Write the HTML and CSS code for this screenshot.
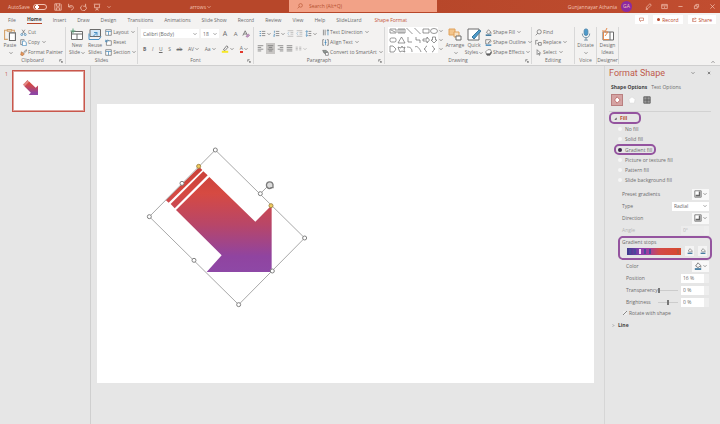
FILE: index.html
```html
<!DOCTYPE html>
<html lang="en">
    <head>
        <meta charset="UTF-8" />
        <meta name="viewport" content="width=device-width, initial-scale=1.0" />
        <title>arrows</title>
        <link rel="stylesheet" href="styles.css">
    </head>
    <body>
        <svg class="sprite" aria-hidden="true">
            <symbol id="down" viewBox="0 0 4 4"><path d="M.5 1.2 2 2.7 3.5 1.2" /></symbol>
            <symbol id="launch" viewBox="0 0 6 6"><path d="M1 4V1h3M2.5 2.5 5 5M5 3v2H3" /></symbol>
            <symbol id="save" viewBox="0 0 10 10"><path d="M1 1h7l1 1v7H1zM3 1v3h4V1M3 9V6h4v3" /></symbol>
            <symbol id="undo" viewBox="0 0 10 10"><path d="M2 1v4h4M2 5c2-3 6-2 6 1 0 2-2 2-3 3" /></symbol>
            <symbol id="redo" viewBox="0 0 10 10"><path d="M7 1v3H4M7 4a3.5 3.5 0 1 1-4-1" /></symbol>
            <symbol id="present" viewBox="0 0 10 10"><path d="M1 1.5h8M2 2v4h6V2M5 6v2M3 9l2-1 2 1" /></symbol>
            <symbol id="search" viewBox="0 0 10 10"><circle cx="6" cy="4" r="3" /><path d="M4 6 1 9" /></symbol>
            <symbol id="pen" viewBox="0 0 10 10"><path d="m2 6 5-5 2 2-5 5-2 .5zM1 9.5h3" /></symbol>
            <symbol id="window" viewBox="0 0 10 10"><path d="M1 2h8v6H1zM1 4h8M5 7V5" /></symbol>
            <symbol id="min" viewBox="0 0 10 10"><path d="M2 5h6" /></symbol>
            <symbol id="restore" viewBox="0 0 10 10"><path d="M2 4h4v4H2zM4 4V2h4v4H6" /></symbol>
            <symbol id="close" viewBox="0 0 10 10"><path d="m2 2 6 6M8 2 2 8" /></symbol>
            <symbol id="share" viewBox="0 0 10 10"><path d="M4 3H1v6h7V7M3 7c0-3 2-4 5-4M6 1l2 2-2 2" /></symbol>
            <symbol id="comment" viewBox="0 0 10 10"><path d="M1 2h8v5H5L3 9V7H1z" /></symbol>
            <symbol id="paste" viewBox="0 0 12 12"><path d="M4 10.5H1V2h2.5M7.5 2H10v2M3.5 3V1.5h4V3z" stroke="#d5a26a" /><path d="M5.5 4.5H11v7H5.5z" fill="#fff" /></symbol>
            <symbol id="cut" viewBox="0 0 10 10"><path d="M3 1l4 6M7 1 3 7" /><circle cx="2.5" cy="8" r="1.4" stroke="#3d85b8" /><circle cx="7.5" cy="8" r="1.4" stroke="#3d85b8" /></symbol>
            <symbol id="copy" viewBox="0 0 10 10"><path d="M3 8H1V1h5v1" /><path d="M3.5 3h3L9 5v4.5H3.5z" fill="#fff" stroke="#3d85b8" /></symbol>
            <symbol id="brush" viewBox="0 0 10 10"><path d="m5 5 3.5-4L10 2 6 6" /><path d="m2 4 4 3-2 2.5-3-1z" fill="#e8995e" stroke="#b97743" /></symbol>
            <symbol id="new-slide" viewBox="0 0 14 12"><path d="M1.500 3h11v8h-11zM1.500 5.500h11M7 5.500V11" fill="#fff" /><path d="M3 0v5M.5 2.500h5" stroke="#5da17a" /></symbol>
            <symbol id="reuse" viewBox="0 0 14 12"><path d="M2 1h10.500v7H2z" fill="#d6e8f5" /><path d="M4 11h7l2-3M1 5v6h4M5 8l4-4M9 7V4H6" stroke="#4a91c3" /></symbol>
            <symbol id="layout" viewBox="0 0 10 10"><path d="M1 1h8v8H1z" fill="#fff" /><path d="M1 3.5h8M5 3.5V9" stroke="#3d85b8" /></symbol>
            <symbol id="reset" viewBox="0 0 10 10"><path d="M2 2.5h7V9H2z" fill="#fff" /><path d="M1 1v3h3M1 4c1-3 4-3 5-1" stroke="#3d85b8" /></symbol>
            <symbol id="clear" viewBox="0 0 10 10"><path d="m1 7 3-6 3 6M2 5h4" /><path d="m5 8 3-3 1.500 1.500L7 9z" fill="#c89bc8" stroke="#a67aa6" /></symbol>
            <symbol id="marker" viewBox="0 0 10 10"><path d="m3 6 4-5 2 1.500L5 7z" /><path d="M1 8.500h8" stroke="#f6e827" stroke-width="2.500" /></symbol>
            <symbol id="bullets" viewBox="0 0 10 10"><path d="M4 2h5M4 5h5M4 8h5" /><path d="M1 2h1.5M1 5h1.5M1 8h1.5" stroke="#3d85b8" stroke-width="1.5" /></symbol>
            <symbol id="numbers" viewBox="0 0 10 10"><path d="M4 2h5M4 5h5M4 8h5" /><path d="M2 1v3M1 6h1.5L1 9h1.5" stroke="#3d85b8" /></symbol>
            <symbol id="indent" viewBox="0 0 10 10"><path d="M1 1h8M5 3.5h4M5 6h4M1 9h8" /><path d="m3 3-2 2 2 2" stroke="#3d85b8" /></symbol>
            <symbol id="spacing" viewBox="0 0 10 10"><path d="M5 2h4M5 5h4M5 8h4" /><path d="M2.5 1v8M1 2.5 2.5 1 4 2.5M1 7.5 2.5 9 4 7.5" stroke="#3d85b8" /></symbol>
            <symbol id="left" viewBox="0 0 10 10"><path d="M1 1h8M1 3.5h5M1 6h8M1 8.5h5" /></symbol>
            <symbol id="center" viewBox="0 0 10 10"><path d="M1 1h8M2.5 3.5h5M1 6h8M2.5 8.5h5" /></symbol>
            <symbol id="right" viewBox="0 0 10 10"><path d="M1 1h8M4 3.5h5M1 6h8M4 8.5h5" /></symbol>
            <symbol id="justify" viewBox="0 0 10 10"><path d="M1 1h8M1 3.5h8M1 6h8M1 8.5h8" /></symbol>
            <symbol id="columns" viewBox="0 0 10 10"><path d="M1 3h3M1 5h3M1 7h3M6 3h3M6 5h3M6 7h3" /></symbol>
            <symbol id="direction" viewBox="0 0 10 10"><path d="M2 1v8M4.5 1v8M7 3l1.5-2L10 3" /><path d="M8.5 1v8" stroke="#3d85b8" /></symbol>
            <symbol id="valign" viewBox="0 0 10 10"><path d="M3 1H1v8h2M7 1h2v8H7" /><path d="M5 1v8M3.5 5h3" stroke="#3d85b8" /></symbol>
            <symbol id="smart" viewBox="0 0 10 10"><path d="M1 2h5l2 2-2 2H3z" fill="#8f9a93" /><path d="M5 5h4v4H5z" fill="#fff" /></symbol>
            <symbol id="gallery" viewBox="0 0 50 26">
                <path d="M2 2h6v4H2zM3 3l4 2M10 2h7v4h-7zM11 3h5M11 5h5M18.5 1l6 6M26.5 1l6 6M35 2h6v4h-6z" />
                <ellipse cx="46" cy="4" rx="3.5" ry="2.5" />
                <rect x="2" y="11" width="6" height="4" rx="1.5" />
                <path d="m13.5 10-3.5 6h7zM20 10v5h4M28 10v3h4v3M35 12h4v-2l2.5 3-2.5 3v-2h-4zM44.5 10h3v3H49l-3 3-3-3h1.5z" />
                <path d="M2 19h3l3 3-2 3H2zM10 20l3 1 1-2 1 2 2-1-1 3 1 2-3-1-2 1-1-2zM19 20c4 0 5 2 5 5M27 20c2-2 5 2 6 5M39 19c-2 0-1 3-3 3 2 0 1 3 3 3M44 19c2 0 1 3 3 3-2 0-1 3-3 3" />
            </symbol>
            <symbol id="arrange" viewBox="0 0 14 13"><path d="M1 1h6v6H1z" fill="#f3c58c" stroke="#e0a25c" /><path d="M6 4h5v5H6z" fill="#f8e2c4" stroke="#e0a25c" /><path d="M8 8h5v4H8z" fill="#fff" /></symbol>
            <symbol id="quick" viewBox="0 0 14 13"><path d="M1 1h11v11H1z" fill="#fff" /><path d="m5 9 7-7 2 1-7 8z" fill="#4f9bc9" stroke="#3a789e" /></symbol>
            <symbol id="fill" viewBox="0 0 10 10"><path d="m2 5 3-4 3.5 3.5L5 7zM8.500 5v2" /><path d="M1 8.800h8" stroke="#2f6d96" stroke-width="2" /></symbol>
            <symbol id="outline" viewBox="0 0 10 10"><path d="M8 1H1v6h2M4 6l4-4 1 1-4 4z" /><path d="M1 8.800h8" stroke="#3d85b8" stroke-width="2" /></symbol>
            <symbol id="effects" viewBox="0 0 10 10"><path d="m2 7-1-3 3-3h4l1 3-2 3z" fill="#fff" /><path d="M2 7h5l2-3v2L7 9H3z" fill="#555" /></symbol>
            <symbol id="replace" viewBox="0 0 10 10"><path d="M1 8V2h3M5 9V5h4v4zM3 6l2 2" /></symbol>
            <symbol id="cursor" viewBox="0 0 10 10"><path d="M3 1v7l2-2 1 3 1-.5L6 6h2z" fill="#fff" /></symbol>
            <symbol id="mic" viewBox="0 0 12 14"><rect x="4" y="1" width="4" height="7" rx="2" fill="#4d9acb" stroke="#4d87ad" /><path d="M2 6c0 6 8 6 8 0M6 10.500V13M4 13h4" stroke="#6c8ca2" /></symbol>
            <symbol id="ideas" viewBox="0 0 14 13"><path d="M2 4h10.500v8H2z" fill="#fff" /><path d="M9 4v8" /><path d="M2.500 4v7.500H8M6 0 4 4h3L4 8M1 3h3" stroke="#e58a4d" /></symbol>
            <symbol id="bucket" viewBox="0 0 10 10"><path d="m2 5 3-4 4 4-4 4z" fill="#fff" stroke="#b85d5b" /></symbol>
            <symbol id="pentagon" viewBox="0 0 10 10"><path d="m5 1 4 3-1 5H2L1 4z" fill="#fff" stroke="#ddd" /></symbol>
            <symbol id="size" viewBox="0 0 10 10"><path d="M1 1h8v8H1zM1 5h8M5 1v8" fill="#999" stroke="#555" /></symbol>
            <symbol id="swatch" viewBox="0 0 10 10"><path d="M1 1h8v8H1z" fill="#fff" /><path d="M6 2h2v6H2V6h4z" fill="#666" stroke="none" /></symbol>
        </svg>

        <header class="titlebar">
            <div class="quick-access">
                <label for="autosave">AutoSave</label>
                <input type="checkbox" id="autosave" class="toggle" />
                <button aria-label="Save"><svg><use href="#save" /></svg></button>
                <button aria-label="Undo"><svg><use href="#undo" /></svg></button>
                <button aria-label="Redo"><svg><use href="#redo" /></svg></button>
                <button aria-label="Present"><svg><use href="#present" /></svg></button>
                <button aria-label="More"><svg class="down"><use href="#down" /></svg></button>
            </div>
            <button class="filename">arrows <svg class="down"><use href="#down" /></svg></button>
            <div class="search">
                <svg><use href="#search" /></svg>
                <input type="text" aria-label="Search" placeholder="Search (Alt+Q)" />
            </div>
            <div class="account">
                <span>Gunjannayar Athania</span>
                <span class="avatar">GA</span>
                <button aria-label="Pen"><svg><use href="#pen" /></svg></button>
                <button aria-label="Ribbon options"><svg><use href="#window" /></svg></button>
                <button aria-label="Minimize"><svg><use href="#min" /></svg></button>
                <button aria-label="Restore"><svg><use href="#restore" /></svg></button>
                <button aria-label="Close"><svg><use href="#close" /></svg></button>
            </div>
        </header>

        <nav class="tabs">
            <a href="#">File</a>
            <a href="#" class="active">Home</a>
            <a href="#">Insert</a>
            <a href="#">Draw</a>
            <a href="#">Design</a>
            <a href="#">Transitions</a>
            <a href="#">Animations</a>
            <a href="#">Slide Show</a>
            <a href="#">Record</a>
            <a href="#">Review</a>
            <a href="#">View</a>
            <a href="#">Help</a>
            <a href="#">SlideLizard</a>
            <a href="#" class="context">Shape Format</a>
            <div class="tab-actions">
                <button aria-label="Comments"><svg><use href="#comment" /></svg></button>
                <button><span class="dot"></span>Record</button>
                <button><svg><use href="#share" /></svg>Share</button>
            </div>
        </nav>

        <section class="ribbon">
            <div class="group clipboard">
                <div class="tools">
                    <button class="big"><svg><use href="#paste" /></svg>Paste<svg class="down"><use href="#down" /></svg></button>
                    <div class="stack">
                        <button><svg><use href="#cut" /></svg>Cut</button>
                        <button><svg><use href="#copy" /></svg>Copy <svg class="down"><use href="#down" /></svg></button>
                        <button><svg><use href="#brush" /></svg>Format Painter</button>
                    </div>
                </div>
                <div class="caption">Clipboard<svg><use href="#launch" /></svg></div>
            </div>
            <div class="group slides">
                <div class="tools">
                    <button class="big"><svg><use href="#new-slide" /></svg>New<span>Slide <svg class="down"><use href="#down" /></svg></span></button>
                    <button class="big"><svg><use href="#reuse" /></svg>Reuse<span>Slides</span></button>
                    <div class="stack">
                        <button><svg><use href="#layout" /></svg>Layout <svg class="down"><use href="#down" /></svg></button>
                        <button><svg><use href="#reset" /></svg>Reset</button>
                        <button><svg><use href="#layout" /></svg>Section <svg class="down"><use href="#down" /></svg></button>
                    </div>
                </div>
                <div class="caption">Slides</div>
            </div>
            <div class="group font">
                <div class="tools rows">
                    <div class="row">
                        <select class="face" aria-label="Font"><option>Calibri (Body)</option></select>
                        <select class="points" aria-label="Font size"><option>18</option></select>
                        <button class="letter big-a">A</button>
                        <button class="letter">A</button>
                        <button aria-label="Clear formatting"><svg><use href="#clear" /></svg></button>
                    </div>
                    <div class="row spread">
                        <button><b>B</b></button>
                        <button><i>I</i></button>
                        <button><u>U</u></button>
                        <button>S</button>
                        <button><s>ab</s></button>
                        <button>AV <svg class="down"><use href="#down" /></svg></button>
                        <button>Aa <svg class="down"><use href="#down" /></svg></button>
                        <button aria-label="Highlight"><svg><use href="#marker" /></svg><svg class="down"><use href="#down" /></svg></button>
                        <button><span class="red-a">A</span><svg class="down"><use href="#down" /></svg></button>
                    </div>
                </div>
                <div class="caption">Font<svg><use href="#launch" /></svg></div>
            </div>
            <div class="group paragraph">
                <div class="tools">
                    <div class="rows">
                        <div class="row spread">
                            <button aria-label="Bullets"><svg><use href="#bullets" /></svg><svg class="down"><use href="#down" /></svg></button>
                            <button aria-label="Numbering"><svg><use href="#numbers" /></svg><svg class="down"><use href="#down" /></svg></button>
                            <button class="off" aria-label="Decrease indent"><svg><use href="#indent" /></svg></button>
                            <button class="off" aria-label="Increase indent"><svg><use href="#indent" /></svg></button>
                            <button aria-label="Line spacing"><svg><use href="#spacing" /></svg><svg class="down"><use href="#down" /></svg></button>
                        </div>
                        <div class="row">
                            <button aria-label="Left"><svg><use href="#left" /></svg></button>
                            <button class="pressed" aria-label="Center"><svg><use href="#center" /></svg></button>
                            <button aria-label="Right"><svg><use href="#right" /></svg></button>
                            <button aria-label="Justify"><svg><use href="#justify" /></svg></button>
                            <button class="off" aria-label="Columns"><svg><use href="#columns" /></svg><svg class="down"><use href="#down" /></svg></button>
                        </div>
                    </div>
                    <div class="stack">
                        <button><svg><use href="#direction" /></svg>Text Direction <svg class="down"><use href="#down" /></svg></button>
                        <button><svg><use href="#valign" /></svg>Align Text <svg class="down"><use href="#down" /></svg></button>
                        <button><svg><use href="#smart" /></svg>Convert to SmartArt <svg class="down"><use href="#down" /></svg></button>
                    </div>
                </div>
                <div class="caption">Paragraph<svg><use href="#launch" /></svg></div>
            </div>
            <div class="group drawing">
                <div class="tools">
                    <div class="shapes">
                        <svg><use href="#gallery" /></svg>
                        <div class="scroller">
                            <button aria-label="Up"><svg class="down"><use href="#down" /></svg></button>
                            <button aria-label="Down"><svg class="down"><use href="#down" /></svg></button>
                            <button aria-label="All shapes"><svg class="down"><use href="#down" /></svg></button>
                        </div>
                    </div>
                    <button class="big"><svg><use href="#arrange" /></svg>Arrange<svg class="down"><use href="#down" /></svg></button>
                    <button class="big"><svg><use href="#quick" /></svg>Quick<span>Styles <svg class="down"><use href="#down" /></svg></span></button>
                    <div class="stack">
                        <button><svg><use href="#fill" /></svg>Shape Fill <svg class="down"><use href="#down" /></svg></button>
                        <button><svg><use href="#outline" /></svg>Shape Outline <svg class="down"><use href="#down" /></svg></button>
                        <button><svg><use href="#effects" /></svg>Shape Effects <svg class="down"><use href="#down" /></svg></button>
                    </div>
                </div>
                <div class="caption">Drawing<svg><use href="#launch" /></svg></div>
            </div>
            <div class="group editing">
                <div class="tools">
                    <div class="stack">
                        <button><svg><use href="#search" /></svg>Find</button>
                        <button><svg><use href="#replace" /></svg>Replace <svg class="down"><use href="#down" /></svg></button>
                        <button><svg><use href="#cursor" /></svg>Select <svg class="down"><use href="#down" /></svg></button>
                    </div>
                </div>
                <div class="caption">Editing</div>
            </div>
            <div class="group single">
                <div class="tools">
                    <button class="big"><svg><use href="#mic" /></svg>Dictate<svg class="down"><use href="#down" /></svg></button>
                </div>
                <div class="caption">Voice</div>
            </div>
            <div class="group single">
                <div class="tools">
                    <button class="big"><svg><use href="#ideas" /></svg>Design<span>Ideas</span></button>
                </div>
                <div class="caption">Designer</div>
            </div>
            <button class="collapse" aria-label="Collapse ribbon"><svg class="down"><use href="#down" /></svg></button>
        </section>

        <main class="workspace">
            <aside class="thumbnails">
                <span>1</span>
                <a href="#" class="thumb" aria-label="Slide 1">
                    <svg viewBox="0 0 497 279">
                        <use href="#arrow-shape" />
                    </svg>
                </a>
            </aside>

            <section class="canvas">
                <div class="slide">
                    <svg viewBox="0 0 497 279">
                        <defs>
                            <linearGradient id="sunset" gradientUnits="userSpaceOnUse" x1="200" y1="80" x2="200" y2="396">
                                <stop offset="0" stop-color="#c94038" />
                                <stop offset=".25" stop-color="#d64a42" />
                                <stop offset=".55" stop-color="#b84668" />
                                <stop offset=".85" stop-color="#9044a0" />
                                <stop offset="1" stop-color="#8e48a6" />
                            </linearGradient>
                            <g id="arrow-shape" transform="translate(43 36) scale(.3333)" fill="url(#sunset)">
                                <path d="m77 180 101-99 9 9L86 188z" />
                                <path d="m92 192 98-98 13 12-99 99z" />
                                <path d="m108 210 100-99 138 134 49-49v200H200l45-50z" />
                            </g>
                        </defs>
                        <use href="#arrow-shape" />
                        <g class="selection" transform="translate(43 36) scale(.3333)">
                            <path d="M226 30 494 294 296 494 28 230zM361 161l20-20" />
                            <g class="handles">
                                <circle cx="226" cy="30" r="6" />
                                <circle cx="494" cy="294" r="6" />
                                <circle cx="296" cy="494" r="6" />
                                <circle cx="28" cy="230" r="6" />
                                <circle cx="126" cy="130" r="6" />
                                <circle cx="361" cy="161" r="6" />
                                <circle cx="162" cy="361" r="6" />
                                <circle cx="397" cy="393" r="6" />
                                <circle cx="176" cy="79" r="6" class="adjust" />
                                <circle cx="393" cy="197" r="6" class="adjust" />
                            </g>
                            <path class="rotate" d="M397 142a10 10 0 1 1 2-9v10h-8" />
                        </g>
                    </svg>
                </div>
            </section>

            <aside class="panel">
                <div class="panel-head">
                    <h1>Format Shape</h1>
                    <button aria-label="Options"><svg class="down"><use href="#down" /></svg></button>
                    <button aria-label="Close pane"><svg><use href="#close" /></svg></button>
                </div>
                <div class="panel-tabs">
                    <a href="#" class="active">Shape Options</a>
                    <a href="#">Text Options</a>
                </div>
                <div class="panel-icons">
                    <button class="active" aria-label="Fill and line"><svg><use href="#bucket" /></svg></button>
                    <button aria-label="Effects"><svg><use href="#pentagon" /></svg></button>
                    <button aria-label="Size"><svg><use href="#size" /></svg></button>
                </div>

                <button class="section-title ringed"><svg viewBox="0 0 4 4"><path d="M3.5.5v3h-3z" /></svg>Fill</button>
                <div class="radios">
                    <label><input type="radio" name="fill" />No fill</label>
                    <label><input type="radio" name="fill" />Solid fill</label>
                    <label class="ringed"><input type="radio" name="fill" checked />Gradient fill</label>
                    <label><input type="radio" name="fill" />Picture or texture fill</label>
                    <label><input type="radio" name="fill" />Pattern fill</label>
                    <label><input type="radio" name="fill" />Slide background fill</label>
                </div>
                <div class="field">
                    <label for="preset">Preset gradients</label>
                    <button id="preset" class="picker"><svg><use href="#swatch" /></svg><svg class="down"><use href="#down" /></svg></button>
                </div>
                <div class="field">
                    <label for="type">Type</label>
                    <select id="type"><option>Radial</option></select>
                </div>
                <div class="field">
                    <label for="dir">Direction</label>
                    <button id="dir" class="picker"><svg><use href="#swatch" /></svg><svg class="down"><use href="#down" /></svg></button>
                </div>
                <div class="field disabled">
                    <label for="angle">Angle</label>
                    <input type="text" id="angle" value="0°" disabled />
                </div>
                <div class="stops ringed">
                    <span>Gradient stops</span>
                    <div class="stops-row">
                        <div class="gradient"><i></i><i></i><i class="current"></i><i></i><i></i><i class="last"></i></div>
                        <button aria-label="Add stop"><svg><use href="#fill" /></svg></button>
                        <button aria-label="Remove stop"><svg><use href="#fill" /></svg></button>
                    </div>
                </div>
                <div class="field sub">
                    <label for="color">Color</label>
                    <button id="color" class="picker"><svg><use href="#fill" /></svg><svg class="down"><use href="#down" /></svg></button>
                </div>
                <div class="field sub">
                    <label for="position">Position</label>
                    <input type="text" id="position" value="16 %" />
                </div>
                <div class="field sub">
                    <label for="transparency">Transparency</label>
                    <input type="range" aria-label="Transparency" value="0" />
                    <input type="text" id="transparency" value="0 %" />
                </div>
                <div class="field sub">
                    <label for="brightness">Brightness</label>
                    <input type="range" aria-label="Brightness" value="50" />
                    <input type="text" id="brightness" value="0 %" />
                </div>
                <label class="rotate-with"><input type="checkbox" checked />Rotate with shape</label>
                <button class="section-title line"><svg viewBox="0 0 4 4"><path d="m1 .5 1.5 1.5L1 3.5" /></svg>Line</button>
            </aside>
        </main>
    </body>
</html>
```
FILE: styles.css
```css
* {
    box-sizing: border-box;
}

body {
    margin: 0;
    height: 100vh;
    display: flex;
    flex-direction: column;
    background: #e6e6e6;
    color: #6b6b6b;
    font: 5px/8px "Open Sans", "Noto Sans", sans-serif;
    overflow: hidden;
}

button, input, select {
    margin: 0;
    padding: 0;
    border: 0;
    background: none;
    color: inherit;
    font: inherit;
    outline: none;
}

button {
    display: flex;
    align-items: center;
    white-space: nowrap;
}

a {
    color: inherit;
    text-decoration: none;
}

svg {
    display: block;
    width: 8px;
    height: 8px;
    flex: none;
    fill: none;
    stroke: currentColor;
}

.sprite {
    position: absolute;
    width: 0;
    height: 0;
}

svg.down {
    width: 4px;
    height: 4px;
    margin-left: 1px;
    stroke-width: .7;
}

/* Title bar */
.titlebar {
    display: grid;
    grid-template-columns: 181px 108px 148px 1fr;
    align-items: center;
    height: 13px;
    background: linear-gradient(90deg, #b7472a 60%, #c14d30);
    color: #f3c4b4;
}

.quick-access {
    display: flex;
    align-items: center;
    gap: 5px;
    padding-left: 8px;
}

.quick-access label {
    margin-right: -2px;
}

.toggle {
    appearance: none;
    width: 14px;
    height: 6px;
    margin-right: 2px;
    border: 1px solid #f3c4b4;
    border-radius: 3px;
    background: radial-gradient(circle at 3px 2px, #fff 2px, transparent 2px);
}

.filename {
    padding-left: 9px;
}

.search {
    display: flex;
    align-items: center;
    align-self: start;
    gap: 6px;
    height: 12px;
    padding-left: 8px;
    background: #f2a287;
    color: #b4502f;
}

.search svg {
    width: 6px;
    height: 6px;
}

.search input {
    flex: 1;
    min-width: 0;
}

.search input::placeholder {
    color: #b4502f;
}

.account {
    display: flex;
    align-items: center;
    justify-content: flex-end;
    gap: 9px;
    padding-right: 4px;
}

.account svg {
    width: 7px;
    height: 7px;
}

.avatar {
    width: 11px;
    height: 11px;
    margin: 0 4px 0 -5px;
    border-radius: 50%;
    background: #8c2aa0;
    line-height: 11px;
    text-align: center;
}

/* Tabs */
.tabs {
    display: flex;
    align-items: center;
    gap: 11px;
    height: 13px;
    padding: 0 4px 0 8px;
    background: #f3f2f1;
}

.tabs .active {
    color: #444;
    font-weight: bold;
    border-bottom: 1px solid #b7472a;
}

.tabs .context {
    margin-left: 2px;
    color: #c4553a;
}

.tab-actions {
    display: flex;
    gap: 5px;
    margin-left: auto;
    color: #b7472a;
}

.tab-actions button {
    gap: 2px;
    height: 9px;
    padding: 0 4px;
    background: #fff;
}

.tab-actions svg {
    width: 5px;
    height: 5px;
}

.dot {
    width: 3px;
    height: 3px;
    border-radius: 50%;
    background: #b7472a;
}

/* Ribbon */
.ribbon {
    display: flex;
    height: 40px;
    padding: 1px 0;
    background: #f3f2f1;
    border-bottom: 1px solid #cfcfcf;
}

.group {
    display: flex;
    flex-direction: column;
    padding: 0 3px;
    border-right: 1px solid #d8d8d8;
}

.clipboard {
    width: 66px;
}

.slides {
    width: 72px;
}

.font {
    width: 116px;
}

.paragraph {
    width: 131px;
}

.drawing {
    width: 147px;
}

.editing {
    width: 43px;
}

.single {
    width: 22px;
    padding: 0;
}

.single .tools {
    justify-content: center;
}

.tools {
    display: flex;
    gap: 3px;
    height: 30px;
}

.caption {
    display: flex;
    justify-content: center;
    line-height: 7px;
}

.caption svg {
    width: 4px;
    height: 4px;
    margin: 2px -1px 0 auto;
}

.caption:has(svg)::before {
    content: "";
    width: 3px;
    margin-right: auto;
}

.big {
    flex-direction: column;
    width: 16px;
    line-height: 7px;
}

.big > svg:first-child {
    width: 14px;
    height: 13px;
    margin: 1px 0;
}

.big span {
    display: flex;
    align-items: center;
}

.big > svg.down {
    margin-top: 2px;
}

.stack {
    display: flex;
    flex-direction: column;
}

.stack button {
    gap: 1px;
    height: 10px;
}

.stack svg:first-child {
    width: 7px;
    height: 7px;
}

.rows {
    display: flex;
    flex-direction: column;
    gap: 2px;
}

.row {
    display: flex;
    align-items: center;
    gap: 2px;
    height: 13px;
}

.spread {
    justify-content: space-between;
    padding: 0 2px;
}

select {
    appearance: none;
    height: 9px;
    padding-left: 2px;
    background: #fff url("data:image/svg+xml,%3Csvg xmlns='http://www.w3.org/2000/svg' viewBox='0 0 4 4'%3E%3Cpath d='M.5 1.200 2 2.700 3.500 1.200' fill='none' stroke='%23777' stroke-width='.7'/%3E%3C/svg%3E") no-repeat right 2px center / 4px 4px;
}

.face {
    width: 60px;
}

.points {
    width: 18px;
}

.letter {
    width: 9px;
    justify-content: center;
    font-size: 6px;
}

.big-a {
    font-size: 7px;
}

.red-a {
    border-bottom: 2px solid #e2382c;
    line-height: 6px;
}

.paragraph .rows {
    width: 66px;
}

.paragraph .row svg:first-child {
    width: 7px;
    height: 7px;
}

.pressed {
    background: #c8c6c4;
    height: 11px;
    padding: 0 1px;
}

.off {
    opacity: .5;
}

.shapes {
    display: flex;
    height: 26px;
    background: #fff;
}

.shapes > svg {
    width: 50px;
    height: 26px;
    stroke-width: .7;
}

.scroller {
    display: flex;
    flex-direction: column;
    justify-content: space-around;
    width: 6px;
    background: #f3f2f1;
}

.collapse {
    align-self: flex-end;
    margin: 0 4px 0 auto;
    transform: rotate(180deg);
}

/* Workspace */
.workspace {
    flex: 1;
    min-height: 0;
    display: flex;
}

.thumbnails {
    display: flex;
    align-items: flex-start;
    gap: 4px;
    width: 91px;
    padding: 4px 5px;
    border-right: 1px solid #cfcfcf;
    color: #c4553a;
}

.thumb {
    flex: 1;
    border: 1px solid #c9574c;
    outline: 1px solid #dfa39d;
    outline-offset: -2px;
    background: #fff;
}

.thumb svg {
    width: 100%;
    height: auto;
    stroke: none;
}

.canvas {
    flex: 1;
    display: flex;
    align-items: center;
    padding: 0 10px 4px 6px;
}

.slide {
    flex: 1;
    background: #fff;
}

.slide svg {
    width: 100%;
    height: auto;
    stroke: none;
}

.selection {
    fill: none;
    stroke: #a8a8a8;
    stroke-width: 3px;
}

.handles {
    fill: #fff;
    stroke: #808080;
}

.handles .adjust {
    fill: #f0c95c;
    stroke: #a48a4a;
}

.rotate {
    fill: #ddd;
    stroke: #7a7a7a;
    stroke-width: 4px;
}

/* Format pane */
.panel {
    width: 116px;
    padding: 0 9px 0 4px;
    border-left: 1px solid #d6d6d6;
}

.panel-head {
    display: flex;
    align-items: center;
    gap: 12px;
    height: 14px;
}

.panel-head h1 {
    flex: 1;
    margin: 0;
    color: #c05a4c;
    font: 9px/12px Roboto, "Open Sans", sans-serif;
}

.panel-head button:last-child svg {
    width: 4px;
    height: 4px;
    stroke-width: 2px;
}

.panel-tabs {
    display: flex;
    gap: 4px;
    padding: 3px 2px 0;
}

.panel-tabs .active {
    color: #444;
    font-weight: bold;
}

.panel-icons {
    display: flex;
    gap: 3px;
    padding: 3px 2px 5px;
    border-bottom: 1px solid #d2d2d2;
}

.panel-icons button {
    justify-content: center;
    width: 12px;
    height: 12px;
}

.panel-icons .active {
    background: #d5a3a3;
    border: 1px solid #b97f7f;
}

.ringed {
    border: 2px solid #94549f;
    border-radius: 5px;
}

.section-title {
    gap: 3px;
    width: 32px;
    height: 12px;
    padding-left: 3px;
    color: #b7472a;
    font-weight: bold;
}

.section-title svg {
    width: 3px;
    height: 3px;
    fill: #444;
    stroke: none;
}

.radios {
    display: flex;
    flex-direction: column;
    align-items: flex-start;
    padding: 0 0 3px 5px;
}

.radios label {
    display: flex;
    align-items: center;
    gap: 3px;
    height: 10px;
    padding: 0 4px;
}

.radios .ringed {
    height: 11px;
    padding: 0 2px;
}

.radios input {
    appearance: none;
    width: 4px;
    height: 4px;
    border-radius: 50%;
    background: #f6f6f6;
}

.radios input:checked {
    background: #3c2848;
}

.field {
    display: flex;
    align-items: center;
    height: 12px;
    padding: 0 2px 0 13px;
}

.field label {
    flex: 1;
}

.field.sub {
    padding-left: 17px;
}

.picker {
    justify-content: center;
    width: 17px;
    height: 11px;
    background: #f8f8f8;
}

.field select {
    width: 37px;
}

.field input[type="text"] {
    width: 28px;
    height: 9px;
    padding-left: 2px;
    border-right: 5px solid #eee;
    background: #fff;
}

.field.disabled {
    color: #b5b5b5;
}

.field.disabled input[type="text"] {
    background: #ececec;
}

input[type="range"] {
    appearance: none;
    width: 20px;
    height: 6px;
    margin-right: 3px;
    background: linear-gradient(#ccc, #ccc) center / 100% 1px no-repeat;
}

input[type="range"]::-webkit-slider-thumb {
    appearance: none;
    width: 2px;
    height: 5px;
    background: #777;
}

.stops {
    height: 24px;
    margin: 0 -1px 0 9px;
    padding: 0 2px;
}

.stops-row {
    display: flex;
    align-items: center;
    gap: 4px;
    padding: 0 1px 0 5px;
}

.stops-row button {
    justify-content: center;
    width: 9px;
    height: 10px;
    background: #f4f4f4;
}

.stops-row button svg {
    width: 6px;
    height: 6px;
}

.gradient {
    flex: 1;
    display: flex;
    gap: 3px;
    height: 7px;
    padding: 1px 2px;
    background: linear-gradient(90deg, #3c3a8c, #8a3fae 25%, #a23fa0 40%, #d24a48 60%, #d8492c);
}

.gradient i {
    width: 2px;
    background: #4b4a9a;
}

.gradient .current {
    background: #f3d8f3;
}

.gradient .last {
    margin-left: auto;
    background: #b8523c;
}

.rotate-with {
    display: flex;
    align-items: center;
    gap: 2px;
    height: 10px;
    padding-left: 14px;
}

.rotate-with input {
    appearance: none;
    width: 4px;
    height: 4px;
    background: linear-gradient(135deg, #eee 40%, #888 50%, #eee 60%);
}

.line {
    height: 14px;
    color: #444;
}

.line svg {
    fill: none;
    stroke: #888;
}
```
